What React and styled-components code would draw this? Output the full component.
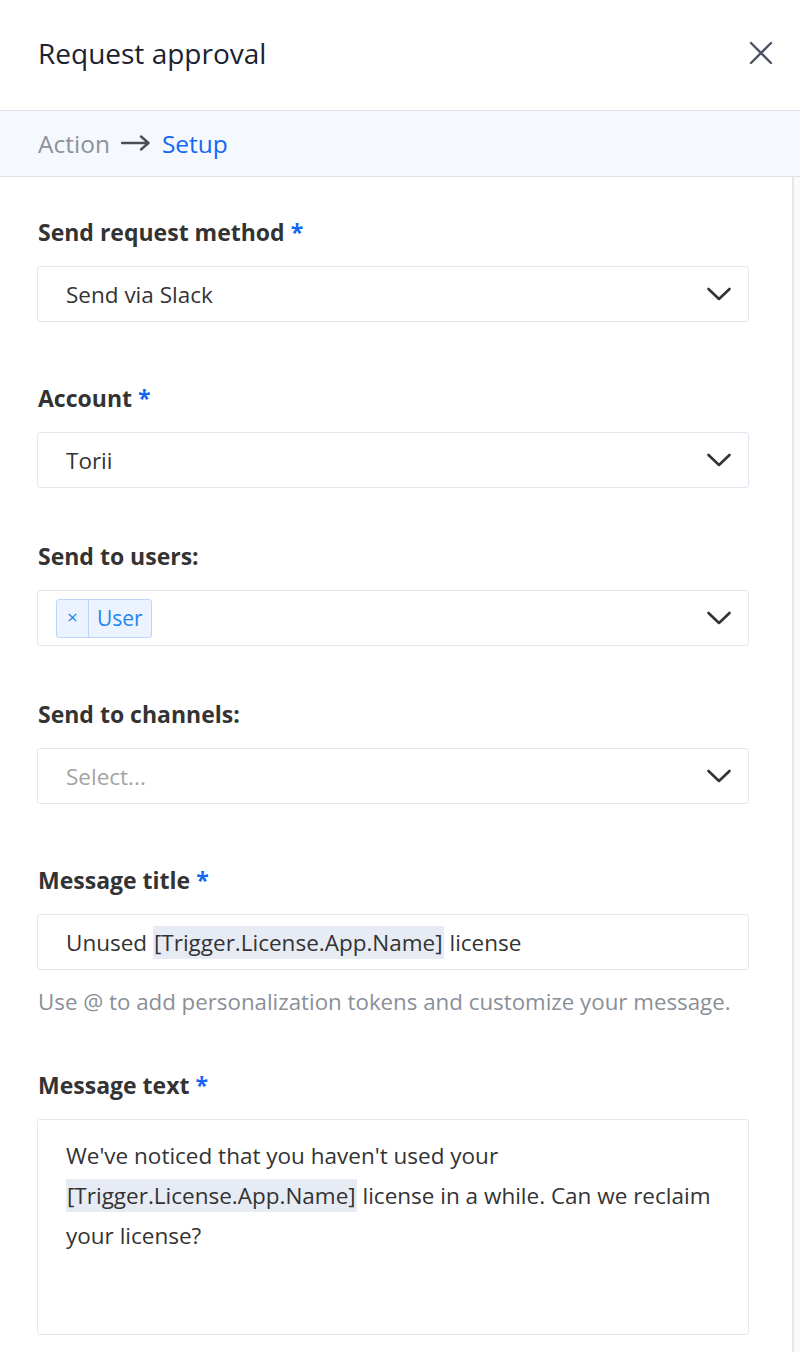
import React from 'react';
import styled, { createGlobalStyle, css } from 'styled-components';

const GlobalStyle = createGlobalStyle`
  html, body {
    margin: 0;
    padding: 0;
    background: #ffffff;
  }
  body {
    font-family: "Open Sans", "Noto Sans", "Liberation Sans", sans-serif;
    color: #333333;
  }
  * { box-sizing: border-box; }
`;

const Panel = styled.div`
  width: 800px;
  height: 1352px;
  display: flex;
  flex-direction: column;
  overflow: hidden;
  background: #fff;
`;

const Header = styled.header`
  height: 111px;
  flex: none;
  display: flex;
  align-items: center;
  justify-content: space-between;
  padding: 0 26px 4px 38px;
  border-bottom: 1px solid #dde1e8;
`;

const Title = styled.h1`
  margin: 0;
  font-size: 28px;
  font-weight: 400;
  color: #1b2330;
`;

const CloseBtn = styled.button`
  border: 0;
  background: none;
  padding: 0;
  width: 26px;
  height: 26px;
  display: flex;
  align-items: center;
  justify-content: center;
  color: #4b5461;
  cursor: pointer;
`;

const Crumbs = styled.nav`
  height: 66px;
  flex: none;
  display: flex;
  align-items: center;
  gap: 11px;
  padding: 0 38px 1px;
  background: #f5f8fd;
  border-bottom: 1px solid #dde1e8;
  font-size: 24.5px;
`;

const Crumb = styled.span`
  color: ${p => (p.active ? '#1467f5' : '#8c929c')};
`;

const Body = styled.div`
  flex: 1;
  display: flex;
  min-height: 0;
`;

const Content = styled.div`
  flex: 1;
  padding: 32px 43px 0 37px;
`;

const Track = styled.div`
  width: 8px;
  flex: none;
  border-left: 2px solid #e6e6e6;
  background: #fafafa;
`;

const Field = styled.div`
  display: flex;
  flex-direction: column;
  margin-bottom: 53px;
  ${p =>
    p.required &&
    css`
      padding-top: 8px;
    `}
`;

const Label = styled.label`
  display: block;
  font-size: 23px;
  line-height: 30px;
  font-weight: 700;
  color: #333333;
  margin: 0 0 19px 1px;
`;

const Star = styled.span`
  color: #1467f5;
  margin-left: 6px;
`;

const Control = styled.div`
  display: flex;
  align-items: center;
  min-height: 56px;
  padding: 0 16px 0 28px;
  border: 1px solid #e4e7ef;
  border-radius: 3px;
  font-size: 22.5px;
  color: ${p => (p.placeholder ? '#a3a3a3' : '#333333')};
  ${p =>
    p.multi &&
    css`
      padding-left: 18px;
    `}
`;

const Value = styled.div`
  flex: 1;
  display: flex;
  align-items: center;
  white-space: nowrap;
`;

const Chevron = styled.svg`
  width: 26px;
  height: 14px;
  flex: none;
`;

const Tag = styled.span`
  display: inline-flex;
  align-items: stretch;
  height: 39px;
  border: 1px solid #bcd7f5;
  border-radius: 3px;
  background: #ebf4fe;
  color: #2684f0;
  font-size: 21px;
`;

const TagRemove = styled.span`
  display: flex;
  align-items: center;
  padding: 0 10px 2px 10px;
  border-right: 1px solid #bcd7f5;
  font-size: 19px;
`;

const TagText = styled.span`
  display: flex;
  align-items: center;
  padding: 0 8px 1px 8px;
`;

const Token = styled.span`
  background: #e7ebf3;
  padding: 1px 1px;
  white-space: nowrap;
`;

const Help = styled.p`
  margin: 18px 0 -7px 1px;
  font-size: 22.3px;
  line-height: 28px;
  color: #8a8f98;
  white-space: nowrap;
`;

const TextArea = styled.div`
  height: 216px;
  padding: 16px 28px;
  border: 1px solid #e4e7ef;
  border-radius: 3px;
  font-size: 22.5px;
  line-height: 40px;
  color: #333333;
`;

const ChevronIcon = () => (
  <Chevron viewBox="0 0 26 14" fill="none">
    <path d="M2.5 2l10.5 10L23.5 2" stroke="#333" strokeWidth="2.6" strokeLinecap="round" strokeLinejoin="round" />
  </Chevron>
);

const SelectField = ({ label, required, placeholder, children, multi }) => (
  <Field required={required}>
    <Label>
      {label}
      {required && <Star>*</Star>}
    </Label>
    <Control placeholder={placeholder} multi={multi}>
      <Value>{children}</Value>
      <ChevronIcon />
    </Control>
  </Field>
);

const App = () => {
  return (
    <>
      <GlobalStyle />
      <Panel>
        <Header>
          <Title>Request approval</Title>
          <CloseBtn aria-label="Close">
            <svg width="24" height="24" viewBox="0 0 24 24" fill="none">
              <path d="M2 2l20 20M22 2L2 22" stroke="currentColor" strokeWidth="2.4" strokeLinecap="round" />
            </svg>
          </CloseBtn>
        </Header>
        <Crumbs>
          <Crumb>Action</Crumb>
          <svg width="30" height="16" viewBox="0 0 30 16" fill="none">
            <path d="M1 8h26M20 1.5L27.5 8 20 14.5" stroke="#4a4f57" strokeWidth="2.4" strokeLinecap="round" strokeLinejoin="round" />
          </svg>
          <Crumb active>Setup</Crumb>
        </Crumbs>
        <Body>
          <Content>
            <SelectField label="Send request method" required>
              Send via Slack
            </SelectField>
            <SelectField label="Account" required>
              Torii
            </SelectField>
            <SelectField label="Send to users:" multi>
              <Tag>
                <TagRemove>×</TagRemove>
                <TagText>User</TagText>
              </Tag>
            </SelectField>
            <SelectField label="Send to channels:" placeholder>
              Select...
            </SelectField>
            <Field required>
              <Label>
                Message title<Star>*</Star>
              </Label>
              <Control>
                <Value>
                  Unused&nbsp;<Token>[Trigger.License.App.Name]</Token>&nbsp;license
                </Value>
              </Control>
              <Help>Use @ to add personalization tokens and customize your message.</Help>
            </Field>
            <Field required>
              <Label>
                Message text<Star>*</Star>
              </Label>
              <TextArea>
                We've noticed that you haven't used your <Token>[Trigger.License.App.Name]</Token> license in
                a while. Can we reclaim your license?
              </TextArea>
            </Field>
          </Content>
          <Track />
        </Body>
      </Panel>
    </>
  );
};

export default App;
